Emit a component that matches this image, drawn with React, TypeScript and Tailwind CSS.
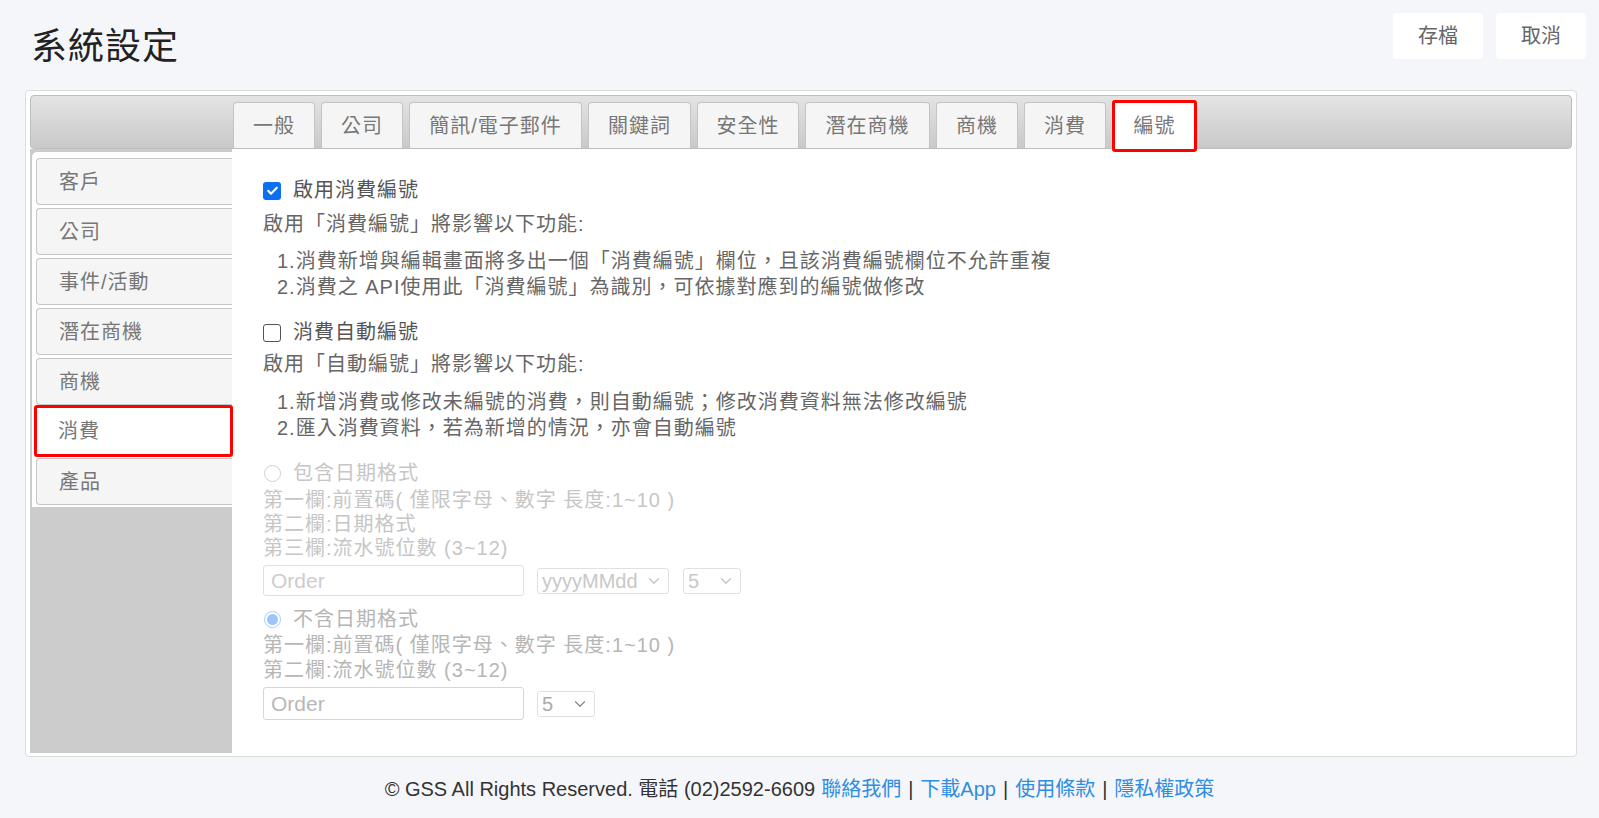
import { ChevronDown } from 'lucide-react'

const TABS = [
  { label: '一般', w: 'w-[82px]' },
  { label: '公司', w: 'w-[82px]' },
  { label: '簡訊/電子郵件', w: 'w-[173px]' },
  { label: '關鍵詞', w: 'w-[103px]' },
  { label: '安全性', w: 'w-[102px]' },
  { label: '潛在商機', w: 'w-[125px]' },
  { label: '商機', w: 'w-[82px]' },
  { label: '消費', w: 'w-[82px]' },
]

const SIDE = ['客戶', '公司', '事件/活動', '潛在商機', '商機']

function CheckBox({ checked }: { checked?: boolean }) {
  if (checked) {
    return (
      <span className="flex h-[18px] w-[18px] items-center justify-center rounded-[3px] bg-[#0b6ff0]">
        <svg width="13" height="13" viewBox="0 0 12 12" fill="none">
          <path d="M2 6.3l2.6 2.6L10 3.4" stroke="white" strokeWidth="2" strokeLinecap="round" strokeLinejoin="round" />
        </svg>
      </span>
    )
  }
  return <span className="h-[18px] w-[18px] rounded-[3px] border-[1.5px] border-[#555] bg-white" />
}

function Radio({ checked }: { checked?: boolean }) {
  return (
    <span className="flex h-[18px] w-[18px] items-center justify-center">
      {checked ? (
        <span className="flex h-[17px] w-[17px] items-center justify-center rounded-full border-[1.5px] border-[#a8cbfa] bg-white">
          <span className="h-[11px] w-[11px] rounded-full bg-[#9fc4f9]" />
        </span>
      ) : (
        <span className="h-[17px] w-[17px] rounded-full border-[1.5px] border-[#d0d0d0] bg-white" />
      )}
    </span>
  )
}

function FakeSelect({ value, w, dark }: { value: string; w: string; dark?: boolean }) {
  return (
    <div
      className={`flex h-[26px] ${w} items-center justify-between rounded-[3px] border border-[#e0e0e0] pl-[4px] pr-[5px] text-[20px] tracking-normal ${
        dark ? 'text-[#aaaaaa]' : 'text-[#c8c8c8]'
      }`}
    >
      <span className="leading-none">{value}</span>
      <ChevronDown size={18} strokeWidth={1.6} className={dark ? 'text-[#888]' : 'text-[#c4c4c4]'} />
    </div>
  )
}

export default function App() {
  return (
    <div className="flex h-[818px] w-full flex-col bg-[#f5f6fa] font-['Liberation_Sans','Noto_Sans_CJK_TC',sans-serif]">
      {/* header */}
      <div className="flex h-[90px] shrink-0 items-start justify-between">
        <h1 className="pl-[31px] pt-[29px] text-[36px] leading-none tracking-[1px] text-[#222]">系統設定</h1>
        <div className="flex gap-[13px] pr-[13px] pt-[13px]">
          <button className="h-[46px] w-[90px] rounded-[4px] bg-white text-[20px] text-[#666]">存檔</button>
          <button className="h-[46px] w-[90px] rounded-[4px] bg-white text-[20px] text-[#666]">取消</button>
        </div>
      </div>

      {/* panel */}
      <div className="ml-[25px] mr-[22px] flex h-[667px] shrink-0 flex-col rounded-[4px] border border-[#dcdcdc] bg-white pb-[3px] pl-[4px] pr-[4px] pt-[4px]">
        <div className="flex h-[54px] shrink-0 items-end gap-[6px] rounded-[4px] border border-[#bdbdbd] bg-gradient-to-b from-[#e4e4e4] to-[#c9c9c9] pl-[202px]">
          {TABS.map(t => (
            <div
              key={t.label}
              className={`flex h-[46px] ${t.w} items-center justify-center rounded-t-[4px] border border-b-0 border-[#c4c4c4] bg-[#f5f5f5] text-[20px] tracking-[1px] text-[#777]`}
            >
              {t.label}
            </div>
          ))}
          <div className="relative z-10 -mb-[4px] flex h-[52px] w-[85px] items-center justify-center rounded-[3px] border-[3px] border-[#f00] bg-white text-[20px] tracking-[1px] text-[#777]">
            編號
          </div>
        </div>

        <div className="flex flex-1">
          {/* sidebar */}
          <div className="w-[202px] shrink-0 bg-[#cccccc]">
            <div className="ml-[2px] mt-[3px] flex flex-col rounded-tl-[5px] bg-white pb-[2px] pl-[4px] pt-[6px]">
              {SIDE.map(s => (
                <div
                  key={s}
                  className="mb-[3px] flex h-[47px] items-center rounded-l-[4px] border border-r-0 border-[#c6c6c6] bg-[#f5f5f5] pl-[22px] text-[20px] tracking-[1px] text-[#777]"
                >
                  {s}
                </div>
              ))}
              <div className="relative z-10 -ml-[2px] -mr-[1px] -mt-[3px] mb-[1px] flex h-[52px] items-center rounded-[3px] border-[3px] border-[#f00] bg-white pl-[21px] text-[20px] tracking-[1px] text-[#777]">
                消費
              </div>
              <div className="flex h-[47px] items-center rounded-l-[4px] border border-r-0 border-[#c6c6c6] bg-[#f5f5f5] pl-[22px] text-[20px] tracking-[1px] text-[#777]">
                產品
              </div>
            </div>
          </div>

          {/* content */}
          <div className="flex-1 bg-white pl-[31px] pt-[29px] text-[20px] leading-[25px] tracking-[1px] text-[#666]">
            <label className="flex h-[25px] items-center gap-[12px]">
              <CheckBox checked />
              <span className="text-[#555]">啟用消費編號</span>
            </label>
            <p className="mt-[9px]">啟用「消費編號」將影響以下功能:</p>
            <div className="ml-[14px] mt-[11px] leading-[26px]">
              <p>1.消費新增與編輯畫面將多出一個「消費編號」欄位，且該消費編號欄位不允許重複</p>
              <p>2.消費之 API使用此「消費編號」為識別，可依據對應到的編號做修改</p>
            </div>

            <label className="mt-[20px] flex h-[25px] items-center gap-[12px]">
              <CheckBox />
              <span className="text-[#555]">消費自動編號</span>
            </label>
            <p className="mt-[7px]">啟用「自動編號」將影響以下功能:</p>
            <div className="ml-[14px] mt-[12px] leading-[26px]">
              <p>1.新增消費或修改未編號的消費，則自動編號；修改消費資料無法修改編號</p>
              <p>2.匯入消費資料，若為新增的情況，亦會自動編號</p>
            </div>

            <div className="text-[#c6c6c6]">
              <div className="mt-[20px] flex h-[25px] items-center gap-[12px]">
                <Radio />
                <span>包含日期格式</span>
              </div>
              <div className="mt-[2px] leading-[24px]">
                <p>第一欄:前置碼( 僅限字母、數字 長度:1~10 )</p>
                <p>第二欄:日期格式</p>
                <p>第三欄:流水號位數 (3~12)</p>
              </div>
              <div className="mt-[5px] flex items-center">
                <div className="flex h-[31px] w-[261px] items-center rounded-[3px] border border-[#e0e0e0] pl-[7px] text-[21px] tracking-normal text-[#cdcdcd]">
                  Order
                </div>
                <div className="ml-[13px]">
                  <FakeSelect value="yyyyMMdd" w="w-[132px]" />
                </div>
                <div className="ml-[14px]">
                  <FakeSelect value="5" w="w-[58px]" />
                </div>
              </div>
            </div>

            <div className="text-[#b6b6b6]">
              <div className="mt-[11px] flex h-[25px] items-center gap-[12px]">
                <Radio checked />
                <span>不含日期格式</span>
              </div>
              <div className="mt-[1px] leading-[25px]">
                <p>第一欄:前置碼( 僅限字母、數字 長度:1~10 )</p>
                <p>第二欄:流水號位數 (3~12)</p>
              </div>
              <div className="mt-[4px] flex items-center">
                <div className="flex h-[33px] w-[261px] items-center rounded-[3px] border border-[#d6d6d6] pl-[7px] text-[21px] tracking-normal text-[#b8b8b8]">
                  Order
                </div>
                <div className="ml-[13px]">
                  <FakeSelect value="5" w="w-[58px]" dark />
                </div>
              </div>
            </div>
          </div>
        </div>
      </div>

      {/* footer */}
      <div className="flex flex-1 items-center justify-center pt-[2px] text-[20px] text-[#333]">
        <span>© GSS All Rights Reserved. 電話 (02)2592-6609</span>
        <a className="ml-[6px] text-[#2f8de4]">聯絡我們</a>
        <span className="mx-[7px]">|</span>
        <a className="text-[#2f8de4]">下載App</a>
        <span className="mx-[7px]">|</span>
        <a className="text-[#2f8de4]">使用條款</a>
        <span className="mx-[7px]">|</span>
        <a className="text-[#2f8de4]">隱私權政策</a>
      </div>
    </div>
  )
}
